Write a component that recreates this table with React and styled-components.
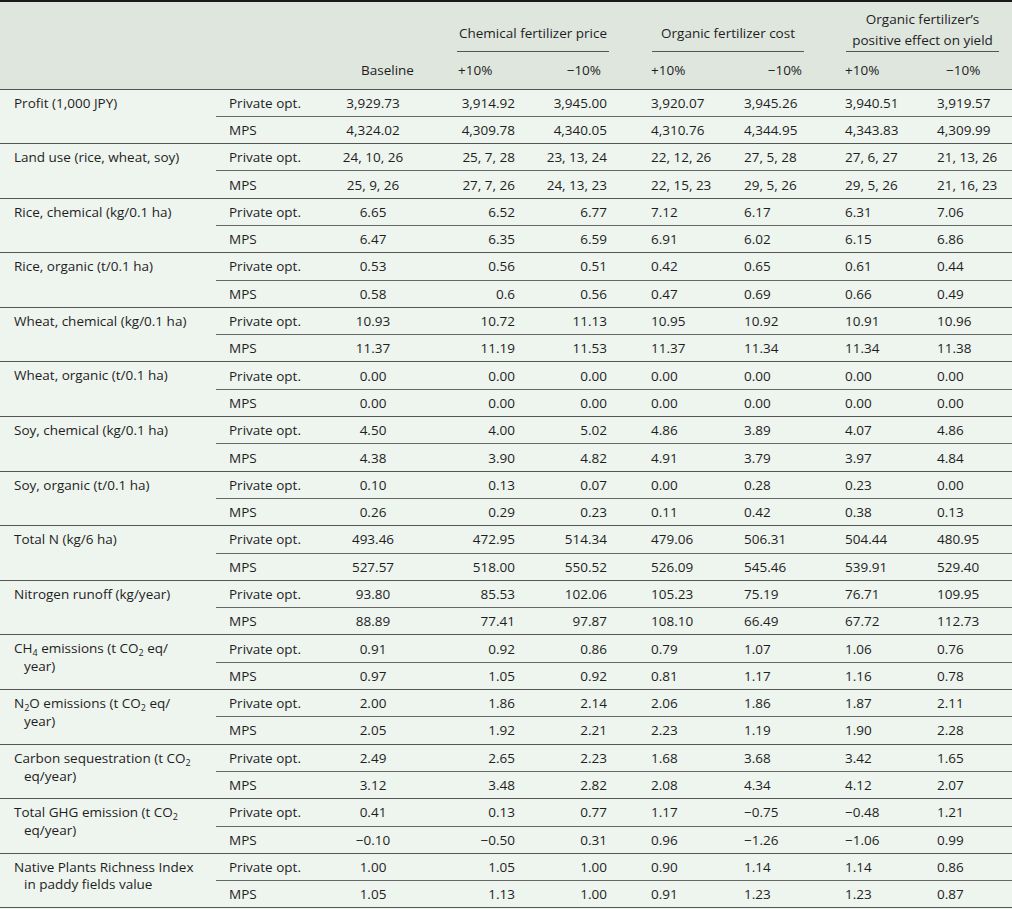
import styled, { createGlobalStyle } from "styled-components";

const GlobalStyle = createGlobalStyle`
  html, body {
    margin: 0;
    padding: 0;
    background: #eef4ee;
  }
  body {
    font-family: "Open Sans", "Noto Sans", sans-serif;
    color: #1e1e1e;
  }
`;

const Table = styled.table`
  width: 1012px;
  table-layout: fixed;
  border-collapse: collapse;
  border-top: 2px solid #1a1a1a;
  border-bottom: 1px solid #3a3a3a;
  font-size: 13.5px;
  background: #eef4ee;
`;

const THead = styled.thead`
  background: #dee6de;
`;

const HeadTopRow = styled.tr`
  height: 51px;
`;

const HeadBottomRow = styled.tr`
  height: 37px;
  border-bottom: 1px solid #555;
`;

const GroupTh = styled.th`
  font-weight: normal;
  vertical-align: bottom;
  padding: 0 ${(p) => p.$pr}px 0 ${(p) => p.$pl}px;
`;

const GroupTitle = styled.div`
  border-bottom: 1px solid #555;
  text-align: center;
  line-height: 21px;
  padding-bottom: ${(p) => (p.$double ? 0 : 7)}px;
`;

const SubTh = styled.th`
  font-weight: normal;
  vertical-align: middle;
  text-align: ${(p) => p.$align || "left"};
  padding: 0 ${(p) => p.$pr || 0}px 0 ${(p) => p.$pl || 0}px;
  white-space: nowrap;
`;

const BodyRow = styled.tr`
  height: 27.3px;
  border-bottom: ${(p) => (p.$last ? "1px solid #555" : "none")};
`;

const LabelTd = styled.td`
  vertical-align: top;
  padding: 5px 0 0 24px;
  text-indent: -10px;
  line-height: 17px;
  white-space: nowrap;
`;

const KindTd = styled.td`
  padding: 0 0 0 13px;
  vertical-align: middle;
  border-bottom: ${(p) => (p.$split ? "1px solid #666" : "none")};
`;

const ValueTd = styled.td`
  padding: 0 ${(p) => p.$pr || 0}px 0 ${(p) => p.$pl || 0}px;
  text-align: ${(p) => p.$align};
  vertical-align: middle;
  white-space: nowrap;
  border-bottom: ${(p) => (p.$split ? "1px solid #666" : "none")};
`;

const Sub = styled.sub`
  font-size: 9px;
  vertical-align: baseline;
  position: relative;
  top: 3px;
`;

const widths = [216, 121, 110, 83, 100, 103, 92, 100, 87];

const valueCols = [
  { align: "center", pl: 0, pr: 38 },
  { align: "right", pr: 15 },
  { align: "right", pr: 23 },
  { align: "left", pl: 21 },
  { align: "left", pl: 11 },
  { align: "left", pl: 20 },
  { align: "left", pl: 12 },
];

const subHeads = [
  { text: "Baseline", pl: 24 },
  { text: "+10%", pl: 11 },
  { text: "\u221210%", align: "right", pr: 29 },
  { text: "+10%", pl: 21 },
  { text: "\u221210%", align: "right", pr: 23 },
  { text: "+10%", pl: 20 },
  { text: "\u221210%", pl: 21 },
];

const m = "\u2212";

const rows = [
  {
    label: "Profit (1,000 JPY)",
    priv: ["3,929.73", "3,914.92", "3,945.00", "3,920.07", "3,945.26", "3,940.51", "3,919.57"],
    mps: ["4,324.02", "4,309.78", "4,340.05", "4,310.76", "4,344.95", "4,343.83", "4,309.99"],
  },
  {
    label: "Land use (rice, wheat, soy)",
    priv: ["24, 10, 26", "25, 7, 28", "23, 13, 24", "22, 12, 26", "27, 5, 28", "27, 6, 27", "21, 13, 26"],
    mps: ["25, 9, 26", "27, 7, 26", "24, 13, 23", "22, 15, 23", "29, 5, 26", "29, 5, 26", "21, 16, 23"],
  },
  {
    label: "Rice, chemical (kg/0.1 ha)",
    priv: ["6.65", "6.52", "6.77", "7.12", "6.17", "6.31", "7.06"],
    mps: ["6.47", "6.35", "6.59", "6.91", "6.02", "6.15", "6.86"],
  },
  {
    label: "Rice, organic (t/0.1 ha)",
    priv: ["0.53", "0.56", "0.51", "0.42", "0.65", "0.61", "0.44"],
    mps: ["0.58", "0.6", "0.56", "0.47", "0.69", "0.66", "0.49"],
  },
  {
    label: "Wheat, chemical (kg/0.1 ha)",
    priv: ["10.93", "10.72", "11.13", "10.95", "10.92", "10.91", "10.96"],
    mps: ["11.37", "11.19", "11.53", "11.37", "11.34", "11.34", "11.38"],
  },
  {
    label: "Wheat, organic (t/0.1 ha)",
    priv: ["0.00", "0.00", "0.00", "0.00", "0.00", "0.00", "0.00"],
    mps: ["0.00", "0.00", "0.00", "0.00", "0.00", "0.00", "0.00"],
  },
  {
    label: "Soy, chemical (kg/0.1 ha)",
    priv: ["4.50", "4.00", "5.02", "4.86", "3.89", "4.07", "4.86"],
    mps: ["4.38", "3.90", "4.82", "4.91", "3.79", "3.97", "4.84"],
  },
  {
    label: "Soy, organic (t/0.1 ha)",
    priv: ["0.10", "0.13", "0.07", "0.00", "0.28", "0.23", "0.00"],
    mps: ["0.26", "0.29", "0.23", "0.11", "0.42", "0.38", "0.13"],
  },
  {
    label: "Total N (kg/6 ha)",
    priv: ["493.46", "472.95", "514.34", "479.06", "506.31", "504.44", "480.95"],
    mps: ["527.57", "518.00", "550.52", "526.09", "545.46", "539.91", "529.40"],
  },
  {
    label: "Nitrogen runoff (kg/year)",
    priv: ["93.80", "85.53", "102.06", "105.23", "75.19", "76.71", "109.95"],
    mps: ["88.89", "77.41", "97.87", "108.10", "66.49", "67.72", "112.73"],
  },
  {
    label: (
      <>
        CH<Sub>4</Sub> emissions (t CO<Sub>2</Sub> eq/
        <br />
        year)
      </>
    ),
    priv: ["0.91", "0.92", "0.86", "0.79", "1.07", "1.06", "0.76"],
    mps: ["0.97", "1.05", "0.92", "0.81", "1.17", "1.16", "0.78"],
  },
  {
    label: (
      <>
        N<Sub>2</Sub>O emissions (t CO<Sub>2</Sub> eq/
        <br />
        year)
      </>
    ),
    priv: ["2.00", "1.86", "2.14", "2.06", "1.86", "1.87", "2.11"],
    mps: ["2.05", "1.92", "2.21", "2.23", "1.19", "1.90", "2.28"],
  },
  {
    label: (
      <>
        Carbon sequestration (t CO<Sub>2</Sub>
        <br />
        eq/year)
      </>
    ),
    priv: ["2.49", "2.65", "2.23", "1.68", "3.68", "3.42", "1.65"],
    mps: ["3.12", "3.48", "2.82", "2.08", "4.34", "4.12", "2.07"],
  },
  {
    label: (
      <>
        Total GHG emission (t CO<Sub>2</Sub>
        <br />
        eq/year)
      </>
    ),
    priv: ["0.41", "0.13", "0.77", "1.17", m + "0.75", m + "0.48", "1.21"],
    mps: [m + "0.10", m + "0.50", "0.31", "0.96", m + "1.26", m + "1.06", "0.99"],
  },
  {
    label: (
      <>
        Native Plants Richness Index
        <br />
        in paddy fields value
      </>
    ),
    priv: ["1.00", "1.05", "1.00", "0.90", "1.14", "1.14", "0.86"],
    mps: ["1.05", "1.13", "1.00", "0.91", "1.23", "1.23", "0.87"],
  },
];

function Values({ list, split }) {
  return list.map((v, i) => (
    <ValueTd
      key={i}
      $align={valueCols[i].align}
      $pl={valueCols[i].pl}
      $pr={valueCols[i].pr}
      $split={split}
    >
      {v}
    </ValueTd>
  ));
}

export default function App() {
  return (
    <>
      <GlobalStyle />
      <Table>
        <colgroup>
          {widths.map((w, i) => (
            <col key={i} style={{ width: w }} />
          ))}
        </colgroup>
        <THead>
          <HeadTopRow>
            <th />
            <th />
            <th />
            <GroupTh colSpan={2} $pl={10} $pr={21}>
              <GroupTitle>Chemical fertilizer price</GroupTitle>
            </GroupTh>
            <GroupTh colSpan={2} $pl={22} $pr={21}>
              <GroupTitle>Organic fertilizer cost</GroupTitle>
            </GroupTh>
            <GroupTh colSpan={2} $pl={21} $pr={13}>
              <GroupTitle $double>
                Organic fertilizer’s
                <br />
                positive effect on yield
              </GroupTitle>
            </GroupTh>
          </HeadTopRow>
          <HeadBottomRow>
            <th />
            <th />
            {subHeads.map((h, i) => (
              <SubTh key={i} $align={h.align} $pl={h.pl} $pr={h.pr}>
                {h.text}
              </SubTh>
            ))}
          </HeadBottomRow>
        </THead>
        <tbody>
          {rows.map((r, i) => [
            <BodyRow key={i + "a"}>
              <LabelTd rowSpan={2}>{r.label}</LabelTd>
              <KindTd $split>Private opt.</KindTd>
              <Values list={r.priv} split />
            </BodyRow>,
            <BodyRow key={i + "b"} $last>
              <KindTd>MPS</KindTd>
              <Values list={r.mps} />
            </BodyRow>,
          ])}
        </tbody>
      </Table>
    </>
  );
}
